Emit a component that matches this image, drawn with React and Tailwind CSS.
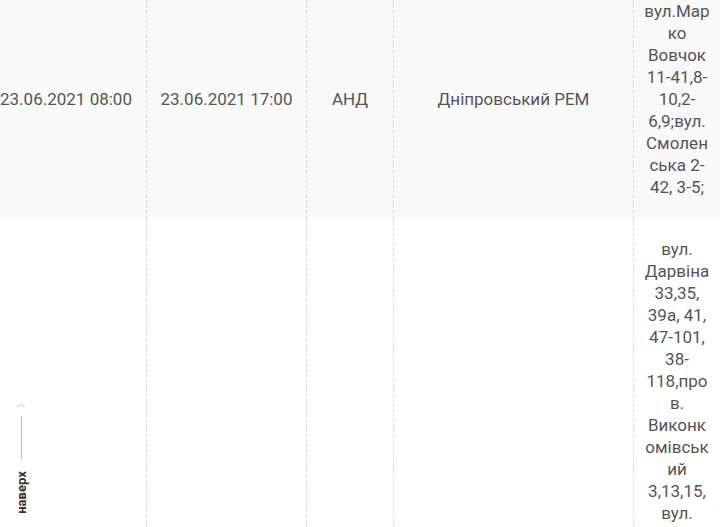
import React from "react";

const cell = "flex items-center justify-center text-center border-l border-dashed border-[#d6d6d6] py-[20px]";

function Row({ bg, start, end, code, rem, addr }) {
  return (
    <div className={`flex ${bg}`}>
      <div className={`${cell} w-[160px] shrink-0 border-l-0`}>{start}</div>
      <div className={`${cell} w-[160px] shrink-0`}>{end}</div>
      <div className={`${cell} w-[87px] shrink-0`}>{code}</div>
      <div className={`${cell} w-[240px] shrink-0`}>{rem}</div>
      <div className={`${cell} w-[87px] shrink-0 px-[10px]`}>
        <div className="w-full break-words">{addr}</div>
      </div>
    </div>
  );
}

export default function App() {
  return (
    <div
      className="relative w-[720px] h-[527px] overflow-hidden bg-white text-[#555] text-[17px] leading-[22px]"
      style={{ fontFamily: "Roboto, 'Noto Sans', sans-serif" }}
    >
      <div className="flex flex-col ml-[-14px] mt-[-20px]">
        <Row
          bg="bg-[#f9f9f9]"
          start="23.06.2021 08:00"
          end="23.06.2021 17:00"
          code="АНД"
          rem="Дніпровський РЕМ"
          addr="вул.Марко Вовчок 11-41,8-10,2-6,9;вул.Смоленська 2-42, 3-5;"
        />
        <Row
          bg="bg-white"
          start=""
          end=""
          code=""
          rem=""
          addr="вул. Дарвіна 33,35, 39а, 41, 47-101, 38-118,пров. Виконкомівський 3,13,15, вул. Осипенка 1-15"
        />
      </div>
      <div className="absolute left-[10px] top-[403px] flex flex-col items-center w-[22px]">
        <svg width="8" height="5" viewBox="0 0 8 5" className="block">
          <path d="M0.5 4.5 L4 1 L7.5 4.5" fill="none" stroke="#c8c8c8" strokeWidth="1" />
        </svg>
        <div className="w-px h-[43px] bg-[#bdbdbd] mt-[8px]" />
        <div className="mt-[10px] h-[46px] flex items-center justify-center">
          <span className="block -rotate-90 whitespace-nowrap text-[13px] font-bold leading-none text-[#333]">
            наверх
          </span>
        </div>
      </div>
    </div>
  );
}
